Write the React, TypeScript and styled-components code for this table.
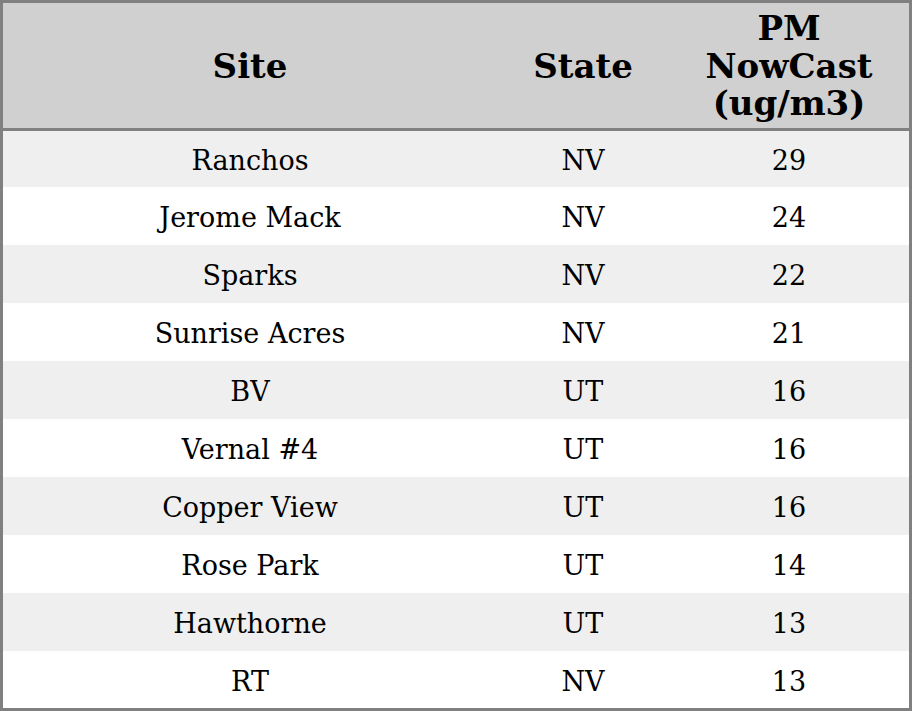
import React from 'react';
import styled, { createGlobalStyle } from 'styled-components';

const GlobalStyle = createGlobalStyle`
  html, body {
    margin: 0;
    padding: 0;
    background: #ffffff;
  }
  body {
    font-family: 'DejaVu Serif', 'Liberation Serif', serif;
  }
`;

const Table = styled.table`
  width: 912px;
  height: 711px;
  border-collapse: separate;
  border-spacing: 0;
  table-layout: fixed;
  border: 3px solid #808080;
  font-family: 'DejaVu Serif', 'Liberation Serif', serif;
  color: #000;
`;

const HeadRow = styled.tr`
  height: 128px;
  background: #d0d0d0;
`;

const HeadCell = styled.th<{ $width: number }>`
  width: ${(p) => p.$width}px;
  padding: 2px 0 0;
  border-bottom: 3px solid #808080;
  font-size: 34px;
  font-weight: bold;
  line-height: 37.5px;
  text-align: center;
  vertical-align: middle;
`;

const Row = styled.tr<{ $shaded: boolean; $height: number }>`
  height: ${(p) => p.$height}px;
  background: ${(p) => (p.$shaded ? '#efefef' : '#ffffff')};
`;

const Cell = styled.td`
  padding: 3px 0 0;
  font-size: 27px;
  text-align: center;
  vertical-align: middle;
`;

const rows = [
  { site: 'Ranchos', state: 'NV', pm: 29 },
  { site: 'Jerome Mack', state: 'NV', pm: 24 },
  { site: 'Sparks', state: 'NV', pm: 22 },
  { site: 'Sunrise Acres', state: 'NV', pm: 21 },
  { site: 'BV', state: 'UT', pm: 16 },
  { site: 'Vernal #4', state: 'UT', pm: 16 },
  { site: 'Copper View', state: 'UT', pm: 16 },
  { site: 'Rose Park', state: 'UT', pm: 14 },
  { site: 'Hawthorne', state: 'UT', pm: 13 },
  { site: 'RT', state: 'NV', pm: 13 },
];

export default function App() {
  return (
    <>
      <GlobalStyle />
      <Table>
        <thead>
          <HeadRow>
            <HeadCell $width={494}>Site</HeadCell>
            <HeadCell $width={172}>State</HeadCell>
            <HeadCell $width={240}>
              PM
              <br />
              NowCast
              <br />
              (ug/m3)
            </HeadCell>
          </HeadRow>
        </thead>
        <tbody>
          {rows.map((r, i) => (
            <Row
              key={r.site}
              $shaded={i % 2 === 0}
              $height={i === 0 ? 56 : i === rows.length - 1 ? 57 : 58}
            >
              <Cell>{r.site}</Cell>
              <Cell>{r.state}</Cell>
              <Cell>{r.pm}</Cell>
            </Row>
          ))}
        </tbody>
      </Table>
    </>
  );
}
